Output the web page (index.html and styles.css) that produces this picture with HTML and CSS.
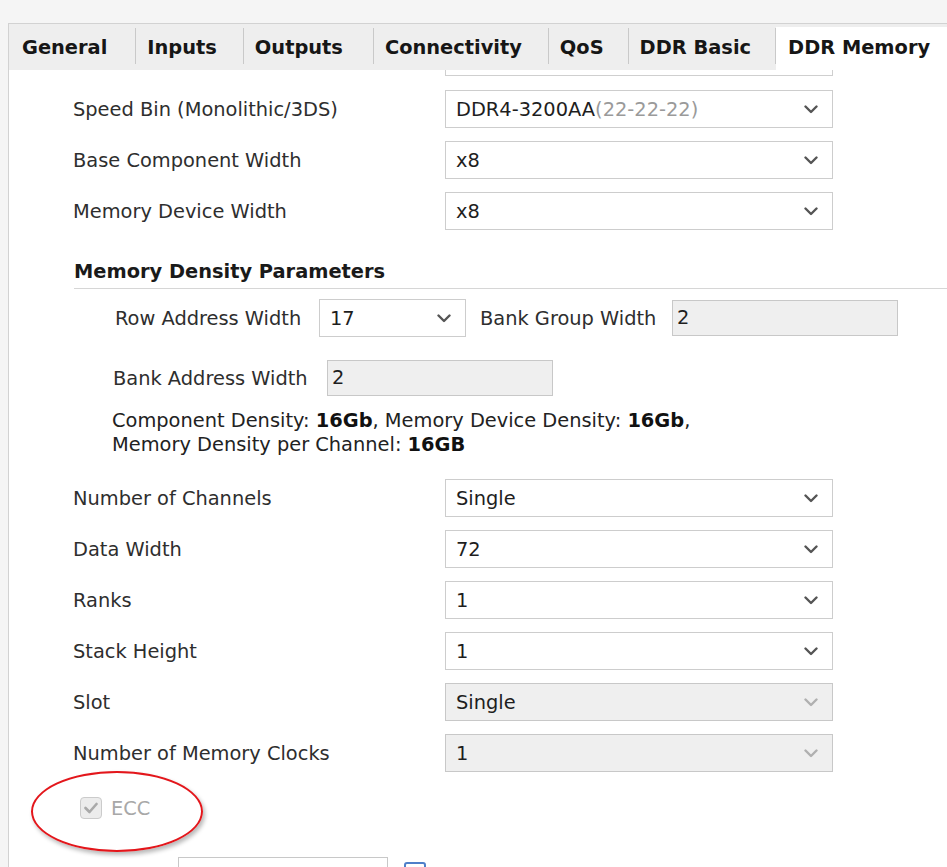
FILE: index.html
```html
<!DOCTYPE html>
<html>
<head>
<meta charset="utf-8">
<title>DDR Memory</title>
<link rel="stylesheet" href="styles.css">
</head>
<body>
<div class="page">
  <div class="panel">
    <div class="tabs">
      <div class="tab tab-first">General</div>
      <div class="tab">Inputs</div>
      <div class="tab tab-wide">Outputs</div>
      <div class="tab">Connectivity</div>
      <div class="tab tab-narrow">QoS</div>
      <div class="tab tab-narrow">DDR Basic</div>
      <div class="tab tab-active">DDR Memory</div>
    </div>
    <div class="content">
      <div class="cut"></div>
      <div class="rows rows-top">
        <div class="row">
          <span class="label">Speed Bin (Monolithic/3DS)</span>
          <div class="select"><span class="val">DDR4-3200AA<span class="muted">(22-22-22)</span></span><svg class="chev" width="14" height="9" viewBox="0 0 14 9"><path d="M1.5 1.5 L7 7 L12.5 1.5" /></svg></div>
        </div>
        <div class="row">
          <span class="label">Base Component Width</span>
          <div class="select"><span class="val">x8</span><svg class="chev" width="14" height="9" viewBox="0 0 14 9"><path d="M1.5 1.5 L7 7 L12.5 1.5" /></svg></div>
        </div>
        <div class="row">
          <span class="label">Memory Device Width</span>
          <div class="select"><span class="val">x8</span><svg class="chev" width="14" height="9" viewBox="0 0 14 9"><path d="M1.5 1.5 L7 7 L12.5 1.5" /></svg></div>
        </div>
      </div>

      <div class="section">
        <div class="section-title">Memory Density Parameters</div>
        <div class="sub-row sub-row-1">
          <span class="sub-label sub-label-1">Row Address Width</span>
          <div class="select select-small"><span class="val">17</span><svg class="chev" width="14" height="9" viewBox="0 0 14 9"><path d="M1.5 1.5 L7 7 L12.5 1.5" /></svg></div>
          <span class="sub-label sub-label-3">Bank Group Width</span>
          <div class="field">2</div>
        </div>
        <div class="sub-row sub-row-2">
          <span class="sub-label sub-label-2">Bank Address Width</span>
          <div class="field">2</div>
        </div>
        <div class="density">
          <div>Component Density: <b>16Gb</b>, Memory Device Density: <b>16Gb</b>,</div>
          <div>Memory Density per Channel: <b>16GB</b></div>
        </div>
      </div>

      <div class="rows rows-bottom">
        <div class="row">
          <span class="label">Number of Channels</span>
          <div class="select"><span class="val">Single</span><svg class="chev" width="14" height="9" viewBox="0 0 14 9"><path d="M1.5 1.5 L7 7 L12.5 1.5" /></svg></div>
        </div>
        <div class="row">
          <span class="label">Data Width</span>
          <div class="select"><span class="val">72</span><svg class="chev" width="14" height="9" viewBox="0 0 14 9"><path d="M1.5 1.5 L7 7 L12.5 1.5" /></svg></div>
        </div>
        <div class="row">
          <span class="label">Ranks</span>
          <div class="select"><span class="val">1</span><svg class="chev" width="14" height="9" viewBox="0 0 14 9"><path d="M1.5 1.5 L7 7 L12.5 1.5" /></svg></div>
        </div>
        <div class="row">
          <span class="label">Stack Height</span>
          <div class="select"><span class="val">1</span><svg class="chev" width="14" height="9" viewBox="0 0 14 9"><path d="M1.5 1.5 L7 7 L12.5 1.5" /></svg></div>
        </div>
        <div class="row">
          <span class="label">Slot</span>
          <div class="select select-disabled"><span class="val">Single</span><svg class="chev" width="14" height="9" viewBox="0 0 14 9"><path d="M1.5 1.5 L7 7 L12.5 1.5" /></svg></div>
        </div>
        <div class="row">
          <span class="label">Number of Memory Clocks</span>
          <div class="select select-disabled"><span class="val">1</span><svg class="chev" width="14" height="9" viewBox="0 0 14 9"><path d="M1.5 1.5 L7 7 L12.5 1.5" /></svg></div>
        </div>
      </div>

      <div class="ecc">
        <span class="checkbox"><svg width="14" height="12" viewBox="0 0 14 12"><path d="M1.5 6 L5.5 10 L12.5 2" /></svg></span>
        <span class="ecc-label">ECC</span>
      </div>

      <div class="bottom-row">
        <div class="bottom-field"></div>
        <span class="blue-box"></span>
      </div>
    </div>
  </div>
  <div class="annot-ellipse"></div>
</div>
</body>
</html>
```

FILE: styles.css
```css
* { box-sizing: border-box; }

html, body {
  margin: 0;
  padding: 0;
  background: #f5f5f5;
  font-family: "DejaVu Sans", "Liberation Sans", sans-serif;
  font-size: 19.4px;
  color: #2e2e2e;
}

.page {
  position: relative;
  width: 947px;
  height: 867px;
  overflow: hidden;
  padding: 23px 0 0 8px;
}

.panel {
  height: 844px;
  background: #ffffff;
  border-top: 1px solid #d2d2d2;
  border-left: 1px solid #d2d2d2;
  overflow: hidden;
}

/* Tabs */
.tabs {
  display: flex;
  height: 46px;
  background: #eeeeee;
  align-items: flex-start;
}

.tab {
  flex: 0 0 auto;
  margin-top: 4px;
  height: 36px;
  line-height: 36px;
  padding: 2px 26px 0 11px;
  border-right: 1px solid #c9c9c9;
  font-weight: bold;
  color: #161616;
  white-space: nowrap;
  overflow: visible;
}

.tab-first { padding-left: 13px; padding-right: 28px; }
.tab-wide { padding-right: 30px; }
.tab-narrow { padding-right: 24px; }

.tab-active {
  flex: 1 1 auto;
  margin-top: 3px;
  height: 43px;
  padding: 3px 0 0 12px;
  border-right: none;
  background: #ffffff;
}

/* Content */
.content {
  padding-left: 64px;
}

.cut {
  margin-left: 372px;
  width: 388px;
  height: 6px;
  border: 1px solid #cfcfcf;
  border-top: none;
}

.rows {
  display: flex;
  flex-direction: column;
  gap: 13px;
}

.rows-top { margin-top: 14px; }
.rows-bottom { margin-top: 22px; }

.row {
  display: flex;
  align-items: center;
  height: 38px;
}

.label {
  width: 372px;
  flex: 0 0 372px;
  white-space: nowrap;
}

.select {
  display: flex;
  align-items: center;
  justify-content: space-between;
  width: 388px;
  height: 38px;
  border: 1px solid #cdcdcd;
  background: #ffffff;
  padding: 0 14px 0 10px;
  color: #1e1e1e;
  white-space: nowrap;
}

.select-small {
  width: 147px;
  margin-right: 14px;
}

.select-disabled {
  background: #efefef;
  border-color: #c8c8c8;
}

.chev path {
  fill: none;
  stroke: #555555;
  stroke-width: 2.4;
  stroke-linecap: round;
  stroke-linejoin: round;
}

.select-disabled .chev path { stroke: #b0b0b0; }

.muted { color: #9a9a9a; }

/* Section */
.section-title {
  margin-top: 30px;
  margin-left: 1px;
  height: 29px;
  line-height: 24px;
  padding-bottom: 4px;
  border-bottom: 1px solid #d6d6d6;
  font-weight: bold;
  color: #1a1a1a;
  margin-right: -40px;
}

.sub-row {
  display: flex;
  align-items: center;
  height: 38px;
}

.sub-row-1 { margin-top: 10px; padding-left: 42px; }
.sub-row-2 { margin-top: 22px; padding-left: 40px; }

.sub-label { white-space: nowrap; }
.sub-label-1 { width: 204px; flex: 0 0 204px; }
.sub-label-2 { width: 214px; flex: 0 0 214px; }
.sub-label-3 { width: 192px; flex: 0 0 192px; }

.field {
  width: 226px;
  height: 36px;
  line-height: 34px;
  border: 1px solid #c8c8c8;
  background: #efefef;
  padding-left: 4px;
  color: #1e1e1e;
}

.density {
  margin-top: 12px;
  padding-left: 39px;
  line-height: 24px;
  color: #222222;
}

.density b { color: #111111; }

/* ECC */
.ecc {
  display: flex;
  align-items: center;
  margin-top: 25px;
  padding-left: 7px;
  height: 22px;
  gap: 9px;
}

.checkbox {
  display: flex;
  align-items: center;
  justify-content: center;
  width: 22px;
  height: 22px;
  border: 1px solid #cbcbcb;
  border-radius: 4px;
  background: #ececec;
}

.checkbox path {
  fill: none;
  stroke: #a9a9a9;
  stroke-width: 2.6;
  stroke-linecap: round;
  stroke-linejoin: round;
}

.ecc-label { color: #a8a8a8; }

.bottom-row {
  display: flex;
  align-items: flex-start;
  margin-top: 38px;
  padding-left: 105px;
  gap: 16px;
}

.bottom-field {
  width: 210px;
  height: 36px;
  border: 1px solid #c8c8c8;
  background: #ffffff;
}

.blue-box {
  margin-top: 5px;
  width: 22px;
  height: 22px;
  border: 2px solid #4f7fc9;
  border-radius: 3px;
  background: #ffffff;
}

/* Annotation */
.annot-ellipse {
  position: absolute;
  left: 31px;
  top: 771px;
  width: 172px;
  height: 81px;
  border: 2px solid #e3161b;
  border-radius: 50%;
  box-shadow: 2px 3px 4px rgba(0, 0, 0, 0.28);
}
```
